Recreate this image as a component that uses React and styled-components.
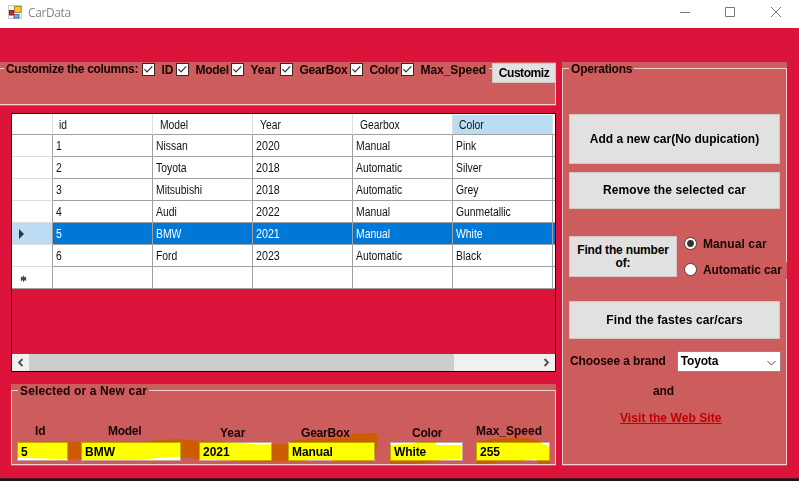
import React from 'react';
import styled, { createGlobalStyle } from 'styled-components';

const Global = createGlobalStyle`
  * { box-sizing: border-box; }
  body { margin: 0; overflow: hidden; background: #dc143c; }
`;

const Window = styled.div`
  width: 799px;
  height: 481px;
  display: flex;
  flex-direction: column;
  background: #dc143c;
  font: bold 12px/14px 'Liberation Sans', Arial, sans-serif;
  color: #180303;
`;

const TitleBar = styled.header`
  height: 28px;
  flex: none;
  display: flex;
  align-items: flex-start;
  background: #fff;
  padding-left: 8px;
`;

const AppIcon = styled.svg`
  width: 14px;
  height: 14px;
  margin-top: 5px;
  flex: none;
`;

const Title = styled.span`
  margin: 5px 0 0 6px;
  flex: 1;
  font: 12px/16px 'Open Sans', 'Noto Sans', sans-serif;
  letter-spacing: -0.4px;
  color: #868686;
`;

const WindowButtons = styled.svg`
  width: 119px;
  height: 28px;
  flex: none;
`;

const Form = styled.main`
  flex: 1;
  display: flex;
  align-items: flex-start;
  gap: 6px;
  padding-top: 34px;
`;

const LeftColumn = styled.div`
  width: 556px;
  flex: none;
`;

const Group = styled.section`
  position: relative;
  width: ${(p) => p.$w}px;
  height: ${(p) => p.$h}px;
  margin: ${(p) => p.$m || '0'};
  background: #cd5c5c;
  &::before {
    content: '';
    position: absolute;
    inset: 6px 0 1px ${(p) => (p.$open ? '-1px' : '0')};
    border: 1px solid #efd3cf;
  }
  & > * { position: relative; }
`;

const Legend = styled.span`
  display: block;
  width: max-content;
  height: 14px;
  margin-left: ${(p) => p.$x}px;
  padding: 0 2px;
  background: #cd5c5c;
  letter-spacing: ${(p) => p.$ls || 0}px;
  white-space: nowrap;
`;

const Text = styled.span`
  letter-spacing: ${(p) => p.$ls || 0}px;
  white-space: pre;
`;

const ColumnBar = styled.div`
  display: flex;
  align-items: flex-start;
  & > ${Legend} { width: 138px; flex: none; }
`;

const Check = styled.label`
  display: flex;
  width: ${(p) => p.$w}px;
  height: 16px;
  flex: none;
  padding-top: 1px;
  gap: 6.5px;
  background: #cd5c5c;
`;

const CheckIcon = styled.svg`
  width: 13px;
  height: 13px;
  flex: none;
`;

const Button = styled.button`
  display: flex;
  align-items: center;
  justify-content: center;
  width: ${(p) => p.$w}px;
  height: ${(p) => p.$h}px;
  margin: ${(p) => p.$m || '0'};
  flex: none;
  padding: 0;
  border: 1px solid #d2c6c6;
  background: #e1e1e1;
  color: #000;
  font: inherit;
  line-height: 13px;
  letter-spacing: ${(p) => p.$ls || 0}px;
`;

const Grid = styled.div`
  width: 545px;
  height: 259px;
  margin: 7px 0 0 11px;
  border: 1px solid #1b0509;
  display: flex;
  flex-direction: column;
  justify-content: space-between;
  overflow: hidden;
`;

const Row = styled.div`
  display: grid;
  grid-template-columns: 41px repeat(5, 100px) 2px;
  height: ${(p) => (p.$head ? 21 : 22)}px;
  overflow: hidden;
  font-weight: normal;
  background: #fff;
  color: #111;
`;

const Cell = styled.div`
  overflow: hidden;
  padding: 4px 0 0 3px;
  border-right: 1px solid #a0a0a0;
  border-bottom: 1px solid #a0a0a0;
  background: ${(p) => (p.$selected ? '#0078d7' : '#fff')};
  color: ${(p) => (p.$selected ? '#fff' : '#111')};
`;

const HeadCell = styled(Cell)`
  padding: 4px 0 0 ${(p) => p.$pad || 7}px;
  border-right-color: #dedede;
  background: ${(p) => (p.$active ? '#bcdcf4' : '#fff')};
  background-clip: padding-box;
  box-shadow: inset 0 1px #fff;
`;

const RowHead = styled(Cell)`
  padding: 0 0 0 6px;
  border-bottom-color: ${(p) => (p.$edge ? '#a0a0a0' : '#dedede')};
  background: ${(p) => (p.$active ? '#bcdcf4' : '#fff')};
  svg { display: block; width: 10px; height: 21px; }
`;

const Narrow = styled.span`
  display: inline-block;
  transform: scaleX(${(p) => p.$scale || 0.86});
  transform-origin: left;
  white-space: nowrap;
`;

const ScrollBar = styled.svg`
  display: block;
  width: 543px;
  height: 17px;
  background: #f0f0f0;
`;

const Fields = styled.div`
  display: flex;
  padding-left: 6px;
  margin-top: 26px;
`;

const Field = styled.label`
  display: block;
  width: ${(p) => p.$w}px;
  height: 38px;
  margin-right: ${(p) => p.$gap || 0}px;
`;

const FieldName = styled(Text)`
  display: block;
  height: 18px;
  padding-top: ${(p) => p.$drop || 0}px;
  padding-left: ${(p) => p.$x}px;
`;

const Input = styled.div`
  height: 19px;
  padding: 2px 0 0 3px;
  border: 1px solid #c4a9a3;
  background: #fff;
  color: #000;
  letter-spacing: ${(p) => p.$ls || 0}px;
`;

const Marker = styled.svg`
  && { position: absolute; }
  left: 0;
  top: 0;
  width: 545px;
  height: 82px;
  mix-blend-mode: multiply;
  pointer-events: none;
`;

const Line = styled.div`
  display: flex;
  padding-left: ${(p) => p.$x}px;
  margin-top: ${(p) => p.$mt}px;
`;

const Radios = styled.div`
  display: flex;
  flex-direction: column;
  gap: 9px;
  height: 41px;
  margin-left: 6px;
`;

const Radio = styled.label`
  display: flex;
  flex: none;
  height: 17px;
  gap: 6px;
  padding: 1px 0 0 1px;
  background: #cd5c5c;
  width: ${(p) => p.$w}px;
  svg { width: 13px; height: 13px; flex: none; }
`;

const Select = styled.div`
  width: 104px;
  height: 21px;
  margin-left: 11px;
  display: flex;
  justify-content: space-between;
  padding: 2px 3px 0 3px;
  border: 1px solid #a77c7c;
  background: #fff;
  color: #000;
  svg { width: 11px; height: 16px; }
`;

const BrandLabel = styled(Text)`
  padding-top: 3px;
`;

const Link = styled.a`
  color: #c00000;
  text-decoration: underline;
  letter-spacing: 0.07px;
`;

const TaskEdge = styled.div`
  height: 3px;
  flex: none;
  background: #191919;
  border-top: 1px solid #4f1822;
`;

const columns = [
  ['ID', 34, 0],
  ['Model', 55, -0.3],
  ['Year', 49, 0],
  ['GearBox', 70, -0.3],
  ['Color', 51, -0.35],
  ['Max_Speed', 88, -0.05],
];

const headers = ['id', 'Model', 'Year', 'Gearbox', 'Color'];

const cars = [
  ['1', 'Nissan', '2020', 'Manual', 'Pink'],
  ['2', 'Toyota', '2018', 'Automatic', 'Silver'],
  ['3', 'Mitsubishi', '2018', 'Automatic', 'Grey'],
  ['4', 'Audi', '2022', 'Manual', 'Gunmetallic'],
  ['5', 'BMW', '2021', 'Manual', 'White'],
  ['6', 'Ford', '2023', 'Automatic', 'Black'],
  ['', '', '', '', ''],
];

const fields = [
  { name: 'Id', value: '5', w: 51, gap: 13, x: 18 },
  { name: 'Model', value: 'BMW', w: 100, gap: 18, x: 27, ls: -0.3 },
  { name: 'Year', value: '2021', w: 73, gap: 16, x: 21, drop: 2 },
  { name: 'GearBox', value: 'Manual', w: 87, gap: 15, x: 13, drop: 2, ls: -0.2, vls: -0.1 },
  { name: 'Color', value: 'White', w: 73, gap: 13, x: 22, drop: 2, ls: -0.2, vls: -0.1 },
  { name: 'Max_Speed', value: '255', w: 74, x: 0 },
];

function CheckBox({ label, width, ls }) {
  return (
    <Check $w={width}>
      <CheckIcon viewBox="0 0 13 13">
        <rect x=".5" y=".5" width="12" height="12" fill="#fff" stroke="#3c2525" />
        <path d="M2.5 6.2 5 8.8l5.3-5.5" fill="none" stroke="#333" strokeWidth="1.2" />
      </CheckIcon>
      <Text $ls={ls}>{label}</Text>
    </Check>
  );
}

function RadioButton({ label, checked, ls, width }) {
  return (
    <Radio $w={width}>
      <svg viewBox="0 0 13 13">
        <circle cx="6.5" cy="6.5" r="6" fill="#fff" stroke="#5a3a3a" />
        {checked && <circle cx="6.5" cy="6.5" r="3.4" fill="#333" />}
      </svg>
      <Text $ls={ls}>{label}</Text>
    </Radio>
  );
}

function CarGrid() {
  return (
    <Grid>
      <div>
        <Row $head>
          <HeadCell />
          {headers.map((h) => (
            <HeadCell key={h} $active={h === 'Color'} $pad={h === 'Color' || h === 'id' ? 6 : 7}>
              <Narrow>{h}</Narrow>
            </HeadCell>
          ))}
          <HeadCell />
        </Row>
        {cars.map((car, i) => (
          <Row key={i}>
            <RowHead $active={i === 4} $edge={i === 6}>
              {i === 4 && (
                <svg viewBox="0 0 10 21"><path d="M1 6v10L6 11z" fill="#333" /></svg>
              )}
              {i === 6 && (
                <svg viewBox="0 0 10 21">
                  <path d="M5.5 8.8v6M3 10l5 3.6M8 10l-5 3.6M2.8 11.8h5.4" stroke="#444" strokeWidth="1.2" />
                </svg>
              )}
            </RowHead>
            {car.map((v, j) => (
              <Cell key={j} $selected={i === 4}>
                <Narrow $scale={j === 2 ? 0.89 : 0.865}>{v}</Narrow>
              </Cell>
            ))}
            <Cell $selected={i === 4} />
          </Row>
        ))}
      </div>
      <ScrollBar viewBox="0 0 543 17">
        <rect x="17" width="425" height="17" fill="#cdcdcd" />
        <path d="M10.5 5 7 8.5l3.5 3.5M532.5 5 536 8.5l-3.5 3.5" fill="none" stroke="#505050" strokeWidth="1.8" />
      </ScrollBar>
    </Grid>
  );
}

export default function App() {
  return (
    <Window>
      <Global />
      <TitleBar>
        <AppIcon viewBox="0 0 14 14">
          <rect x=".5" y=".5" width="13" height="13" fill="#f5f5f7" stroke="#c8c8cc" />
          <rect x="6.5" y="1.5" width="6.5" height="6" fill="#f5c834" stroke="#b58a25" />
          <rect x="1.5" y="5.5" width="4" height="4.5" fill="#cf2b32" stroke="#8a1f28" />
          <rect x="6" y="9.5" width="5" height="3.5" fill="#76a5ea" stroke="#4873ba" />
        </AppIcon>
        <Title>CarData</Title>
        <WindowButtons viewBox="0 0 119 28">
          <g fill="none" stroke="#777">
            <path d="M0 12.5h10M45.5 7.5h9v9h-9zM91 7l10 10M101 7l-10 10" />
          </g>
        </WindowButtons>
      </TitleBar>
      <Form>
        <LeftColumn>
          <Group $w={556} $h={44} $open>
            <ColumnBar>
              <Legend $x={4} $ls={-0.3}>Customize the columns:</Legend>
              {columns.map(([label, width, ls]) => (
                <CheckBox key={label} label={label} width={width} ls={ls} />
              ))}
              <Button $w={64} $h={20} $m="1px 0 0 3px" $ls={-0.45}>Customiz</Button>
            </ColumnBar>
          </Group>
          <CarGrid />
          <Group $w={545} $h={82} $m="12px 0 0 11px">
            <Legend $x={7} $ls={0.14}>Selected or a New car</Legend>
            <Fields>
              {fields.map((f) => (
                <Field key={f.name} $w={f.w} $gap={f.gap}>
                  <FieldName $x={f.x} $drop={f.drop} $ls={f.ls}>{f.name}</FieldName>
                  <Input $ls={f.vls}>{f.value}</Input>
                </Field>
              ))}
            </Fields>
            <Marker viewBox="0 0 545 82">
              <path
                fill="#ff0"
                d="M6 58H130Q164 53 189 57L230 58.7 247 60.5 277 60 280 57 300 54.5 336 54 342 49.5
                   364 49Q367 50 366.5 54L365.5 65 364 67 363 77H322L320 76H297L295 77H277L260 78
                   230 77 189 75.5 167 72.7 147 74 130 76H70L60 74.5 45 75 20 74H6z"
              />
              <path
                fill="#ff0"
                d="M379 61 399 60 410 57.5H424L425 61 450 61V75L432 76 418 78 405 80H379z"
              />
              <path
                fill="#ff0"
                d="M465 58 475 56 490 54H518L530 57V60L537 61 539 70V80H528L525 75 510 77H490L480 80H465z"
              />
            </Marker>
          </Group>
        </LeftColumn>
        <Group $w={225} $h={404}>
          <Legend $x={7} $ls={-0.2}>Operations</Legend>
          <Button $w={211} $h={50} $m="38px 0 0 7px">Add a new car(No dupication)</Button>
          <Button $w={211} $h={37} $m="8px 0 0 7px" $ls={0.1}>Remove the selected car</Button>
          <Line $x={7} $mt={27}>
            <Button $w={108} $h={41} $ls={-0.17}>Find the number<br />of:</Button>
            <Radios>
              <RadioButton label="Manual car" checked ls={0.1} width={98} />
              <RadioButton label="Automatic car" ls={-0.1} width={104} />
            </Radios>
          </Line>
          <Button $w={211} $h={38} $m="24px 0 0 7px" $ls={0.1}>Find the fastes car/cars</Button>
          <Line $x={8} $mt={12}>
            <BrandLabel $ls={-0.1}>Choosee a brand</BrandLabel>
            <Select>
              <Text $ls={-0.2}>Toyota</Text>
              <svg viewBox="0 0 11 16"><path d="m1.5 7 4 4 4-4" fill="none" stroke="#444" /></svg>
            </Select>
          </Line>
          <Line $x={91} $mt={12}><Text $ls={-0.1}>and</Text></Line>
          <Line $x={58} $mt={13}><Link>Visit the Web Site</Link></Line>
        </Group>
      </Form>
      <TaskEdge />
    </Window>
  );
}
